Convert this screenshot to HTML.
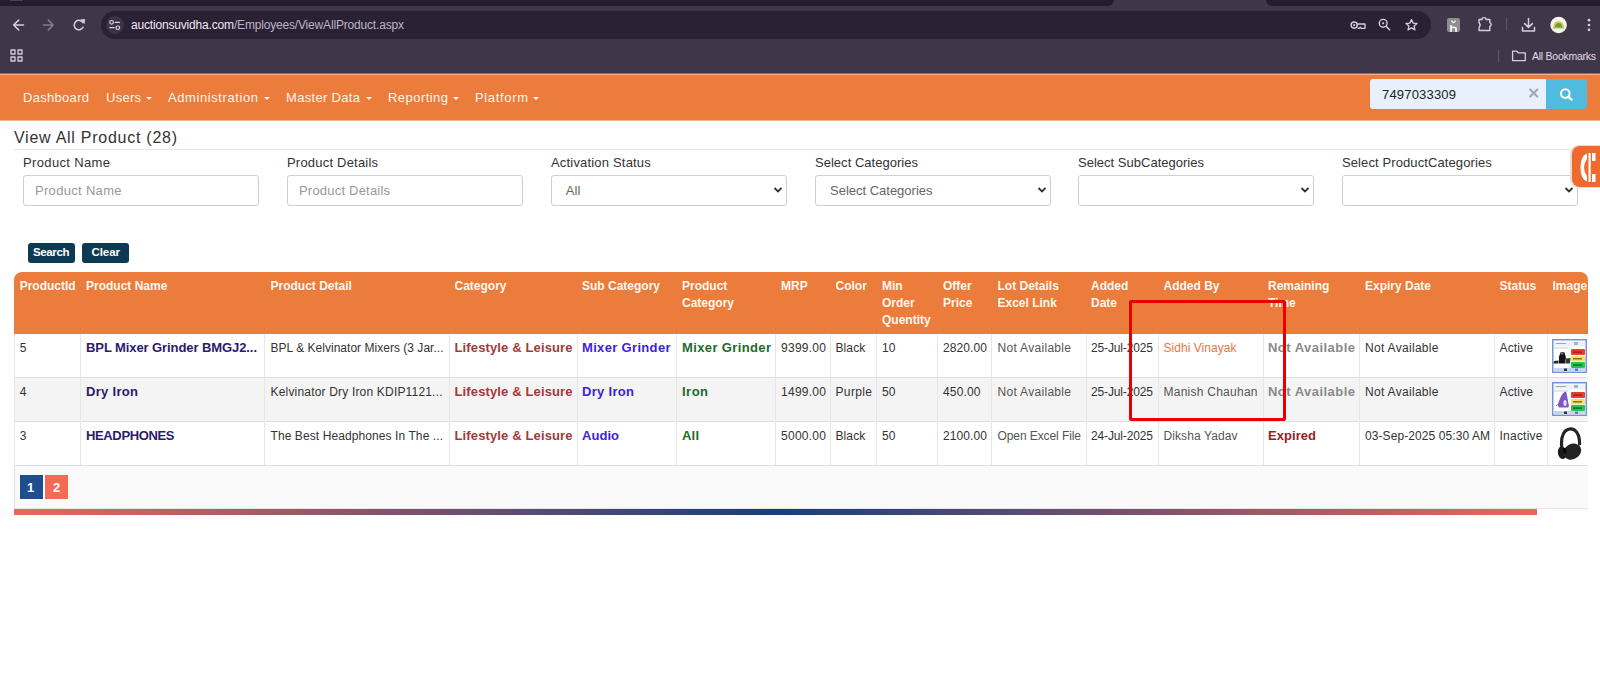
<!DOCTYPE html>
<html><head><meta charset="utf-8">
<style>
*{box-sizing:border-box;margin:0;padding:0}
html,body{width:1600px;height:690px;overflow:hidden;background:#fff;font-family:'Liberation Sans',sans-serif;}
.a{position:absolute}
.t{position:absolute;white-space:nowrap;line-height:1}
</style></head><body>
<div class="a" style="left:0;top:0;width:1600px;height:73px;background:#3f3649"></div><div class="a" style="left:0;top:0;width:1114px;height:6px;background:#251c30;border-bottom-right-radius:6px"></div><div class="a" style="left:1266px;top:0;width:334px;height:6px;background:#251c30;border-bottom-left-radius:6px"></div><div class="a" style="left:10px;top:0;width:13px;height:1px;background:#4a4055"></div><div class="a" style="left:101px;top:11px;width:1330px;height:28px;background:#2a2134;border-radius:14px"></div><div class="a" style="left:105.7px;top:16px;width:18px;height:18px;background:#3c3347;border-radius:9px"></div><div class="t" style="left:131px;top:19px;font-size:12px;color:#eeeaf2;font-weight:400;letter-spacing:-0.176px;">auctionsuvidha.com<span style="color:#bcb4c6">/Employees/ViewAllProduct.aspx</span></div>
<svg class="a" style="left:0;top:0" width="1600" height="73" viewBox="0 0 1600 73">
 <g fill="none" stroke="#d6cee0" stroke-width="1.5" stroke-linecap="round" stroke-linejoin="round">
  <path d="M13.6 25 H23.5 M13.6 25 L18.7 20.1 M13.6 25 L18.7 29.9"/>
  <path d="M43.5 25 H53.2 M53.2 25 L48.3 20.1 M53.2 25 L48.3 29.9" stroke="#857b90"/>
  <path d="M82.9 22.6 A4.7 4.7 0 1 0 83.1 27.2"/>
  <circle cx="111.6" cy="22.3" r="1.8" stroke-width="1.2"/>
  <path d="M115.2 22.4 H119.3" stroke-width="1.3"/>
  <circle cx="117.8" cy="27.8" r="1.8" stroke-width="1.2"/>
  <path d="M110 27.7 H114.2" stroke-width="1.3"/>
  <rect x="11" y="50" width="4" height="4" stroke-width="1.3" stroke-linecap="butt"/>
  <rect x="18" y="50" width="4" height="4" stroke-width="1.3" stroke-linecap="butt"/>
  <rect x="11" y="57" width="4" height="4" stroke-width="1.3" stroke-linecap="butt"/>
  <rect x="18" y="57" width="4" height="4" stroke-width="1.3" stroke-linecap="butt"/>
  <circle cx="1354.2" cy="25.1" r="3.1" stroke-width="1.4"/>
  <path d="M1357.3 24 H1365 V28.3 H1361.2 L1360.2 27.2 L1359.2 28.3 H1358" stroke-width="1.3"/>
  <circle cx="1383.2" cy="23.3" r="3.9" stroke-width="1.4"/>
  <path d="M1386.1 26.2 L1389.6 29.7" stroke-width="1.5"/>
  <path d="M1411.5 19.5 L1413.2 23.1 L1417 23.5 L1414.1 26.1 L1415 29.9 L1411.5 27.9 L1408 29.9 L1408.9 26.1 L1406 23.5 L1409.8 23.1 Z" stroke-width="1.3"/>
  <path d="M1479 19.5 H1482 V18.8 Q1482 17.6 1484 17.6 Q1486 17.6 1486 18.8 V19.5 H1489.8 V22.6 Q1491.2 23 1491.2 24.5 Q1491.2 26 1489.8 26.4 V30.5 H1479 Q1478.6 27.5 1480.2 25 Q1478.6 22.5 1479 19.5 Z" stroke-width="1.4"/>
  <path d="M1528.5 18.6 V27.3 M1524.6 23.6 L1528.5 27.4 L1532.4 23.6 M1522.5 27.5 V30.9 H1534.5 V27.5"/>
 </g>
 <path d="M80.6 19.8 L84.7 19.3 L84.4 23.6 Z" fill="#d6cee0" stroke="#d6cee0" stroke-width="0.6" stroke-linejoin="round"/>
 <circle cx="1354.2" cy="25.1" r="1.1" fill="#d6cee0"/>
 <circle cx="1383.2" cy="23.3" r="1.1" fill="#d6cee0"/>
 <rect x="1506" y="18" width="1" height="13" fill="#5f566a"/>
 <rect x="1447" y="18" width="13" height="14" rx="2" fill="#8f8c92"/>
 <path d="M1451.3 20.8 L1453.5 22.6 L1455.7 20.8" stroke="#f2f2f2" stroke-width="1.2" fill="none"/>
 <path d="M1451 32 V25 M1451 28.2 Q1453.5 26.4 1456 28.2 V32" stroke="#fff" stroke-width="1.6" fill="none"/>
 <circle cx="1558.6" cy="25" r="8.3" fill="#f6f3ee"/>
 <path d="M1553 28 Q1553.5 21.5 1558.6 21.2 Q1563.7 21.5 1564.2 28 Z" fill="#e0c040"/>
 <path d="M1555 27.5 Q1555.5 23.2 1558.6 23 Q1561.7 23.2 1562.2 27.5 Z" fill="#58a838"/>
 <rect x="1553" y="27.6" width="11.2" height="0.8" fill="#9bbf50"/>
 <circle cx="1589" cy="20.2" r="1.35" fill="#d6cee0"/>
 <circle cx="1589" cy="25" r="1.35" fill="#d6cee0"/>
 <circle cx="1589" cy="29.8" r="1.35" fill="#d6cee0"/>
 <rect x="1498" y="50" width="1" height="12" fill="#5f566a"/>
 <path d="M1512.6 51.2 H1516.8 L1518.2 52.8 H1525.3 V60.6 H1512.6 Z" fill="none" stroke="#d6cee0" stroke-width="1.3" stroke-linejoin="round"/>
</svg>
<div class="t" style="left:1532px;top:51px;font-size:10.5px;color:#e3dde9;font-weight:400;letter-spacing:-0.259px;">All Bookmarks</div><div class="a" style="left:0;top:73px;width:1600px;height:1px;background:#8a6c6c"></div><div class="a" style="left:0;top:74px;width:1600px;height:1px;background:#f5b08a"></div><div class="a" style="left:0;top:75px;width:1600px;height:45px;background:#eb7c3b"></div><div class="a" style="left:0;top:120px;width:1600px;height:1px;background:#f3b690"></div><div class="t" style="left:23px;top:90.75px;font-size:13px;color:#fff6ec;font-weight:400;letter-spacing:0.299px;">Dashboard</div><div class="t" style="left:106px;top:90.75px;font-size:13px;color:#fff6ec;font-weight:400;letter-spacing:0.262px;">Users</div><div class="t" style="left:168px;top:90.75px;font-size:13px;color:#fff6ec;font-weight:400;letter-spacing:0.587px;">Administration</div><div class="t" style="left:286px;top:90.75px;font-size:13px;color:#fff6ec;font-weight:400;letter-spacing:0.319px;">Master Data</div><div class="t" style="left:388px;top:90.75px;font-size:13px;color:#fff6ec;font-weight:400;letter-spacing:0.453px;">Reporting</div><div class="t" style="left:475px;top:90.75px;font-size:13px;color:#fff6ec;font-weight:400;letter-spacing:0.656px;">Platform</div><div class="a" style="left:146px;top:97px;width:0;height:0;border-left:3.5px solid transparent;border-right:3.5px solid transparent;border-top:3.5px solid #fff6ec"></div><div class="a" style="left:264px;top:97px;width:0;height:0;border-left:3.5px solid transparent;border-right:3.5px solid transparent;border-top:3.5px solid #fff6ec"></div><div class="a" style="left:366px;top:97px;width:0;height:0;border-left:3.5px solid transparent;border-right:3.5px solid transparent;border-top:3.5px solid #fff6ec"></div><div class="a" style="left:453px;top:97px;width:0;height:0;border-left:3.5px solid transparent;border-right:3.5px solid transparent;border-top:3.5px solid #fff6ec"></div><div class="a" style="left:533px;top:97px;width:0;height:0;border-left:3.5px solid transparent;border-right:3.5px solid transparent;border-top:3.5px solid #fff6ec"></div><div class="a" style="left:1370px;top:79px;width:176px;height:30px;background:#e8f0fe;border-radius:3px 0 0 3px"></div><div class="t" style="left:1382px;top:88px;font-size:13px;color:#222;font-weight:400;letter-spacing:0.188px;">7497033309</div><svg class="a" style="left:1520px;top:80px" width="30" height="28" viewBox="1520 80 30 28"><path d="M1530.2 89.5 L1537.3 96.6 M1537.3 89.5 L1530.2 96.6" stroke="#a4a7ae" stroke-width="2.1" stroke-linecap="round"/></svg><div class="a" style="left:1546px;top:79px;width:41px;height:30px;background:#50bbdf;border-radius:0 3px 3px 0"></div><svg class="a" style="left:1558px;top:86px" width="16" height="16" viewBox="0 0 16 16"><circle cx="7.3" cy="7.6" r="4.3" fill="none" stroke="#fff" stroke-width="2"/><path d="M10.4 10.8 L13.6 13.6" stroke="#fff" stroke-width="2.4" stroke-linecap="round"/></svg><div class="t" style="left:14px;top:130px;font-size:16px;color:#333;font-weight:400;letter-spacing:0.739px;">View All Product (28)</div><div class="a" style="left:14px;top:149px;width:1576px;height:1px;background:#e8e8e8"></div><div class="t" style="left:23px;top:156px;font-size:13px;color:#333;font-weight:400;letter-spacing:0.355px;">Product Name</div><div class="a" style="left:23px;top:175px;width:236px;height:31px;border:1px solid #cfcfcf;border-radius:3px;background:#fff"></div><div class="t" style="left:35.0px;top:184px;font-size:13px;color:#999;font-weight:400;letter-spacing:0.310px;">Product Name</div><div class="t" style="left:287px;top:156px;font-size:13px;color:#333;font-weight:400;letter-spacing:0.203px;">Product Details</div><div class="a" style="left:287px;top:175px;width:236px;height:31px;border:1px solid #cfcfcf;border-radius:3px;background:#fff"></div><div class="t" style="left:299.0px;top:184px;font-size:13px;color:#999;font-weight:400;letter-spacing:0.203px;">Product Details</div><div class="t" style="left:551px;top:156px;font-size:13px;color:#333;font-weight:400;letter-spacing:0.183px;">Activation Status</div><div class="a" style="left:551px;top:175px;width:236px;height:31px;border:1px solid #cfcfcf;border-radius:3px;background:#fff"></div><div class="t" style="left:565.75px;top:184px;font-size:13px;color:#666;font-weight:400;letter-spacing:0.148px;">All</div><svg class="a" style="left:773px;top:186px" width="10" height="8" viewBox="0 0 10 8"><path d="M1.5 2 L5 5.5 L8.5 2" fill="none" stroke="#333" stroke-width="1.8"/></svg><div class="t" style="left:815px;top:156px;font-size:13px;color:#333;font-weight:400;letter-spacing:0.023px;">Select Categories</div><div class="a" style="left:815px;top:175px;width:236px;height:31px;border:1px solid #cfcfcf;border-radius:3px;background:#fff"></div><div class="t" style="left:830.0px;top:184px;font-size:13px;color:#666;font-weight:400;letter-spacing:-0.008px;">Select Categories</div><svg class="a" style="left:1037px;top:186px" width="10" height="8" viewBox="0 0 10 8"><path d="M1.5 2 L5 5.5 L8.5 2" fill="none" stroke="#333" stroke-width="1.8"/></svg><div class="t" style="left:1078px;top:156px;font-size:13px;color:#333;font-weight:400;letter-spacing:0.013px;">Select SubCategories</div><div class="a" style="left:1078px;top:175px;width:236px;height:31px;border:1px solid #cfcfcf;border-radius:3px;background:#fff"></div><svg class="a" style="left:1300px;top:186px" width="10" height="8" viewBox="0 0 10 8"><path d="M1.5 2 L5 5.5 L8.5 2" fill="none" stroke="#333" stroke-width="1.8"/></svg><div class="t" style="left:1342px;top:156px;font-size:13px;color:#333;font-weight:400;letter-spacing:0.101px;">Select ProductCategories</div><div class="a" style="left:1342px;top:175px;width:236px;height:31px;border:1px solid #cfcfcf;border-radius:3px;background:#fff"></div><svg class="a" style="left:1564px;top:186px" width="10" height="8" viewBox="0 0 10 8"><path d="M1.5 2 L5 5.5 L8.5 2" fill="none" stroke="#333" stroke-width="1.8"/></svg><div class="a" style="left:1572px;top:146px;width:40px;height:41px;background:#ef6a2c;border-radius:8px;box-shadow:0 0 0 1px #fbd6c0, -1px 0 1px 1px #d8dde6"></div><svg class="a" style="left:1578px;top:152px" width="22" height="32" viewBox="0 0 22 32"><path d="M9 1.5 Q2.5 4 2.5 15.5 Q2.5 27 9 29.5 L9 24 Q6 20 6 15.5 Q6 11 9 7 Z" fill="#fff"/><rect x="10.5" y="1" width="2.2" height="29" fill="#fff"/><rect x="14" y="1" width="3.5" height="8" fill="#fff"/><rect x="14" y="22" width="3.5" height="8" fill="#fff"/></svg><div class="a" style="left:28px;top:243px;width:46.5px;height:20px;background:#0c3a52;border-radius:3px"></div><div class="t" style="left:33px;top:247px;font-size:11.5px;color:#fff;font-weight:700;letter-spacing:-0.372px;">Search</div><div class="a" style="left:82px;top:243px;width:46.5px;height:20px;background:#0c3a52;border-radius:3px"></div><div class="t" style="left:91.5px;top:247px;font-size:11.5px;color:#fff;font-weight:700;letter-spacing:-0.070px;">Clear</div><div class="a" style="left:14px;top:272px;width:1574px;height:62px;background:#eb7c3b;border-radius:8px 8px 0 0"></div><div class="a" style="left:14px;top:377px;width:1574px;height:44px;background:#f4f4f4"></div><div class="a" style="left:14px;top:465px;width:1574px;height:44px;background:#f9f9f9;border-bottom:1px solid #e6e6e6"></div><div class="a" style="left:14px;top:377px;width:1574px;height:1px;background:#dedede"></div><div class="a" style="left:14px;top:421px;width:1574px;height:1px;background:#dedede"></div><div class="a" style="left:14px;top:465px;width:1574px;height:1px;background:#dedede"></div><div class="a" style="left:14px;top:334px;width:1px;height:131px;background:#e7e7e7"></div><div class="a" style="left:80px;top:334px;width:1px;height:131px;background:#e7e7e7"></div><div class="a" style="left:264px;top:334px;width:1px;height:131px;background:#e7e7e7"></div><div class="a" style="left:449px;top:334px;width:1px;height:131px;background:#e7e7e7"></div><div class="a" style="left:577px;top:334px;width:1px;height:131px;background:#e7e7e7"></div><div class="a" style="left:676px;top:334px;width:1px;height:131px;background:#e7e7e7"></div><div class="a" style="left:775px;top:334px;width:1px;height:131px;background:#e7e7e7"></div><div class="a" style="left:830px;top:334px;width:1px;height:131px;background:#e7e7e7"></div><div class="a" style="left:876px;top:334px;width:1px;height:131px;background:#e7e7e7"></div><div class="a" style="left:937px;top:334px;width:1px;height:131px;background:#e7e7e7"></div><div class="a" style="left:991px;top:334px;width:1px;height:131px;background:#e7e7e7"></div><div class="a" style="left:1086px;top:334px;width:1px;height:131px;background:#e7e7e7"></div><div class="a" style="left:1158px;top:334px;width:1px;height:131px;background:#e7e7e7"></div><div class="a" style="left:1263px;top:334px;width:1px;height:131px;background:#e7e7e7"></div><div class="a" style="left:1359px;top:334px;width:1px;height:131px;background:#e7e7e7"></div><div class="a" style="left:1494px;top:334px;width:1px;height:131px;background:#e7e7e7"></div><div class="a" style="left:1547px;top:334px;width:1px;height:131px;background:#e7e7e7"></div><div class="a" style="left:14px;top:465px;width:1px;height:44px;background:#e2e2e2"></div><div class="a" style="left:19.7px;top:277.5px;width:67px;overflow:hidden;font-size:12px;line-height:17px;color:#fff8f0;font-weight:700;white-space:nowrap">ProductId</div><div class="a" style="left:86px;top:277.5px;width:185px;overflow:hidden;font-size:12px;line-height:17px;color:#fff8f0;font-weight:700;white-space:nowrap">Product Name</div><div class="a" style="left:270.5px;top:277.5px;width:186px;overflow:hidden;font-size:12px;line-height:17px;color:#fff8f0;font-weight:700;white-space:nowrap">Product Detail</div><div class="a" style="left:454.5px;top:277.5px;width:129px;overflow:hidden;font-size:12px;line-height:17px;color:#fff8f0;font-weight:700;white-space:nowrap">Category</div><div class="a" style="left:582px;top:277.5px;width:100px;overflow:hidden;font-size:12px;line-height:17px;color:#fff8f0;font-weight:700;white-space:nowrap">Sub Category</div><div class="a" style="left:682px;top:277.5px;width:100px;overflow:hidden;font-size:12px;line-height:17px;color:#fff8f0;font-weight:700;white-space:nowrap">Product<br>Category</div><div class="a" style="left:781px;top:277.5px;width:56px;overflow:hidden;font-size:12px;line-height:17px;color:#fff8f0;font-weight:700;white-space:nowrap">MRP</div><div class="a" style="left:835.5px;top:277.5px;width:47px;overflow:hidden;font-size:12px;line-height:17px;color:#fff8f0;font-weight:700;white-space:nowrap">Color</div><div class="a" style="left:882px;top:277.5px;width:62px;overflow:hidden;font-size:12px;line-height:17px;color:#fff8f0;font-weight:700;white-space:nowrap">Min<br>Order<br>Quentity</div><div class="a" style="left:943px;top:277.5px;width:55px;overflow:hidden;font-size:12px;line-height:17px;color:#fff8f0;font-weight:700;white-space:nowrap">Offer<br>Price</div><div class="a" style="left:997.5px;top:277.5px;width:96px;overflow:hidden;font-size:12px;line-height:17px;color:#fff8f0;font-weight:700;white-space:nowrap">Lot Details<br>Excel Link</div><div class="a" style="left:1091px;top:277.5px;width:73px;overflow:hidden;font-size:12px;line-height:17px;color:#fff8f0;font-weight:700;white-space:nowrap">Added<br>Date</div><div class="a" style="left:1163.5px;top:277.5px;width:106px;overflow:hidden;font-size:12px;line-height:17px;color:#fff8f0;font-weight:700;white-space:nowrap">Added By</div><div class="a" style="left:1268px;top:277.5px;width:97px;overflow:hidden;font-size:12px;line-height:17px;color:#fff8f0;font-weight:700;white-space:nowrap">Remaining<br>Time</div><div class="a" style="left:1365px;top:277.5px;width:136px;overflow:hidden;font-size:12px;line-height:17px;color:#fff8f0;font-weight:700;white-space:nowrap">Expiry Date</div><div class="a" style="left:1499.5px;top:277.5px;width:54px;overflow:hidden;font-size:12px;line-height:17px;color:#fff8f0;font-weight:700;white-space:nowrap">Status</div><div class="a" style="left:1552.5px;top:277.5px;width:36px;overflow:hidden;font-size:12px;line-height:17px;color:#fff8f0;font-weight:700;white-space:nowrap">Image</div><div class="t" style="left:19.7px;top:342px;font-size:12px;color:#333;font-weight:400;">5</div><div class="t" style="left:86px;top:341px;font-size:13px;color:#2b1b6b;font-weight:700;letter-spacing:-0.086px;">BPL Mixer Grinder BMGJ2...</div><div class="t" style="left:270.5px;top:342px;font-size:12px;color:#333;font-weight:400;letter-spacing:0.022px;">BPL &amp; Kelvinator Mixers (3 Jar...</div><div class="t" style="left:454.5px;top:341px;font-size:13px;color:#a23a3a;font-weight:700;letter-spacing:0.133px;">Lifestyle &amp; Leisure</div><div class="t" style="left:582px;top:341px;font-size:13px;color:#3d1fd8;font-weight:700;letter-spacing:0.331px;">Mixer Grinder</div><div class="t" style="left:682px;top:341px;font-size:13px;color:#1c6b2a;font-weight:700;letter-spacing:0.372px;">Mixer Grinder</div><div class="t" style="left:781px;top:342px;font-size:12px;color:#333;font-weight:400;letter-spacing:0.268px;">9399.00</div><div class="t" style="left:835.5px;top:342px;font-size:12px;color:#333;font-weight:400;letter-spacing:0.102px;">Black</div><div class="t" style="left:882px;top:342px;font-size:12px;color:#333;font-weight:400;">10</div><div class="t" style="left:943px;top:342px;font-size:12px;color:#333;font-weight:400;letter-spacing:0.102px;">2820.00</div><div class="t" style="left:997.5px;top:342px;font-size:12px;color:#555;font-weight:400;letter-spacing:0.306px;">Not Available</div><div class="t" style="left:1091px;top:342px;font-size:12px;color:#333;font-weight:400;letter-spacing:-0.138px;">25-Jul-2025</div><div class="t" style="left:1163.5px;top:342px;font-size:12px;color:#e8773f;font-weight:400;letter-spacing:0.042px;">Sidhi Vinayak</div><div class="t" style="left:1268px;top:341px;font-size:13px;color:#8a8a8a;font-weight:700;letter-spacing:0.467px;">Not Available</div><div class="t" style="left:1365px;top:342px;font-size:12px;color:#333;font-weight:400;letter-spacing:0.306px;">Not Available</div><div class="t" style="left:1499.5px;top:342px;font-size:12px;color:#333;font-weight:400;letter-spacing:0.163px;">Active</div><div class="t" style="left:19.7px;top:386px;font-size:12px;color:#333;font-weight:400;">4</div><div class="t" style="left:86px;top:385px;font-size:13px;color:#2b1b6b;font-weight:700;letter-spacing:0.308px;">Dry Iron</div><div class="t" style="left:270.5px;top:386px;font-size:12px;color:#333;font-weight:400;letter-spacing:0.182px;">Kelvinator Dry Iron KDIP1121...</div><div class="t" style="left:454.5px;top:385px;font-size:13px;color:#a23a3a;font-weight:700;letter-spacing:0.133px;">Lifestyle &amp; Leisure</div><div class="t" style="left:582px;top:385px;font-size:13px;color:#3d1fd8;font-weight:700;letter-spacing:0.308px;">Dry Iron</div><div class="t" style="left:682px;top:385px;font-size:13px;color:#1c6b2a;font-weight:700;letter-spacing:0.479px;">Iron</div><div class="t" style="left:781px;top:386px;font-size:12px;color:#333;font-weight:400;letter-spacing:0.268px;">1499.00</div><div class="t" style="left:835.5px;top:386px;font-size:12px;color:#333;font-weight:400;letter-spacing:0.362px;">Purple</div><div class="t" style="left:882px;top:386px;font-size:12px;color:#333;font-weight:400;">50</div><div class="t" style="left:943px;top:386px;font-size:12px;color:#333;font-weight:400;letter-spacing:0.159px;">450.00</div><div class="t" style="left:997.5px;top:386px;font-size:12px;color:#555;font-weight:400;letter-spacing:0.306px;">Not Available</div><div class="t" style="left:1091px;top:386px;font-size:12px;color:#333;font-weight:400;letter-spacing:-0.138px;">25-Jul-2025</div><div class="t" style="left:1163.5px;top:386px;font-size:12px;color:#555;font-weight:400;letter-spacing:0.251px;">Manish Chauhan</div><div class="t" style="left:1268px;top:385px;font-size:13px;color:#8a8a8a;font-weight:700;letter-spacing:0.467px;">Not Available</div><div class="t" style="left:1365px;top:386px;font-size:12px;color:#333;font-weight:400;letter-spacing:0.306px;">Not Available</div><div class="t" style="left:1499.5px;top:386px;font-size:12px;color:#333;font-weight:400;letter-spacing:0.163px;">Active</div><div class="t" style="left:19.7px;top:430px;font-size:12px;color:#333;font-weight:400;">3</div><div class="t" style="left:86px;top:429px;font-size:13px;color:#2b1b6b;font-weight:700;letter-spacing:-0.361px;">HEADPHONES</div><div class="t" style="left:270.5px;top:430px;font-size:12px;color:#333;font-weight:400;letter-spacing:0.090px;">The Best Headphones In The ...</div><div class="t" style="left:454.5px;top:429px;font-size:13px;color:#a23a3a;font-weight:700;letter-spacing:0.133px;">Lifestyle &amp; Leisure</div><div class="t" style="left:582px;top:429px;font-size:13px;color:#3d1fd8;font-weight:700;letter-spacing:0.043px;">Audio</div><div class="t" style="left:682px;top:429px;font-size:13px;color:#1c6b2a;font-weight:700;letter-spacing:0.188px;">All</div><div class="t" style="left:781px;top:430px;font-size:12px;color:#333;font-weight:400;letter-spacing:0.268px;">5000.00</div><div class="t" style="left:835.5px;top:430px;font-size:12px;color:#333;font-weight:400;letter-spacing:0.102px;">Black</div><div class="t" style="left:882px;top:430px;font-size:12px;color:#333;font-weight:400;">50</div><div class="t" style="left:943px;top:430px;font-size:12px;color:#333;font-weight:400;letter-spacing:0.102px;">2100.00</div><div class="t" style="left:997.5px;top:430px;font-size:12px;color:#555;font-weight:400;letter-spacing:-0.086px;">Open Excel File</div><div class="t" style="left:1091px;top:430px;font-size:12px;color:#333;font-weight:400;letter-spacing:-0.138px;">24-Jul-2025</div><div class="t" style="left:1163.5px;top:430px;font-size:12px;color:#555;font-weight:400;letter-spacing:0.097px;">Diksha Yadav</div><div class="t" style="left:1268px;top:429px;font-size:13px;color:#9b1c1c;font-weight:700;letter-spacing:0.052px;">Expired</div><div class="t" style="left:1365px;top:430px;font-size:12px;color:#333;font-weight:400;letter-spacing:0.083px;">03-Sep-2025 05:30 AM</div><div class="t" style="left:1499.5px;top:430px;font-size:12px;color:#333;font-weight:400;letter-spacing:0.234px;">Inactive</div><svg class="a" style="left:1552px;top:338.5px" width="35" height="34" viewBox="0 0 35 34"><rect x="0.75" y="0.75" width="33.5" height="32.5" fill="#fff" stroke="#6a8ed6" stroke-width="1.4"/><rect x="2" y="2.5" width="31" height="5" fill="#eef1f5"/><rect x="4" y="4" width="10" height="1" fill="#9aa"/><rect x="22" y="3" width="4" height="3" fill="#9bb"/><rect x="2" y="8.5" width="14" height="1" fill="#ccd"/><rect x="19" y="10" width="14" height="6" rx="1" fill="#ee3b30"/><rect x="21" y="12.5" width="9" height="1.2" fill="#8a1a10"/><rect x="19" y="17" width="14" height="5.5" rx="1" fill="#efe070"/><rect x="21" y="19.2" width="9" height="1.2" fill="#6a5a10"/><rect x="19" y="23" width="14" height="6" rx="1" fill="#22c45a"/><rect x="21" y="25.5" width="9" height="1.2" fill="#0a5a20"/><rect x="1.5" y="29" width="32" height="3.5" fill="#c8d4ea"/><rect x="12" y="29.5" width="3" height="2.5" fill="#333"/><rect x="23" y="29.5" width="3" height="2.5" fill="#5a80d2"/><path d="M8 14 Q10 12.5 12.5 13.5 L13.5 17 Q14.5 19 13.5 21 L13.5 24.5 L7 24.5 L7 20.5 Q6.5 17.5 8 15 Z" fill="#141414"/><path d="M2 22 L6.5 21.5 L6.5 24.5 L1.5 24.5 Z" fill="#2a2a2a"/><path d="M14 19.5 L18.5 19 L18 24.5 L14 24.5 Z" fill="#3a3a3a"/><ellipse cx="10" cy="14.5" rx="1.6" ry="1.2" fill="#666"/></svg><svg class="a" style="left:1552px;top:382px" width="35" height="34" viewBox="0 0 35 34"><rect x="0.75" y="0.75" width="33.5" height="32.5" fill="#fff" stroke="#6a8ed6" stroke-width="1.4"/><rect x="2" y="2.5" width="31" height="5" fill="#eef1f5"/><rect x="4" y="4" width="10" height="1" fill="#9aa"/><rect x="22" y="3" width="4" height="3" fill="#9bb"/><rect x="2" y="8.5" width="14" height="1" fill="#ccd"/><rect x="19" y="10" width="14" height="6" rx="1" fill="#ee3b30"/><rect x="21" y="12.5" width="9" height="1.2" fill="#8a1a10"/><rect x="19" y="17" width="14" height="5.5" rx="1" fill="#efe070"/><rect x="21" y="19.2" width="9" height="1.2" fill="#6a5a10"/><rect x="19" y="23" width="14" height="6" rx="1" fill="#22c45a"/><rect x="21" y="25.5" width="9" height="1.2" fill="#0a5a20"/><rect x="1.5" y="29" width="32" height="3.5" fill="#c8d4ea"/><rect x="12" y="29.5" width="3" height="2.5" fill="#333"/><rect x="23" y="29.5" width="3" height="2.5" fill="#5a80d2"/><path d="M13 9.5 Q9 12 6 22 Q5.5 25 7 25.5 L16 25.5 Q17.5 25 16.5 22 L14.5 10.5 Z" fill="#7d55c8"/><ellipse cx="13" cy="21" rx="1.6" ry="3" fill="#e8e0f8"/><path d="M6 22 L4 24" stroke="#777" stroke-width="0.8"/></svg><svg class="a" style="left:1548px;top:422px" width="44" height="44" viewBox="0 0 44 44"><path d="M13.8 27 Q12.5 14 17 9.3 Q21.5 5.2 26.5 8 Q31.6 11.5 31.6 22" fill="none" stroke="#242424" stroke-width="3.2" stroke-linecap="round"/><ellipse cx="14.2" cy="30.8" rx="4.3" ry="6.3" transform="rotate(-10 14.2 30.8)" fill="#1b1b1b"/><ellipse cx="24.2" cy="29.6" rx="9.4" ry="7.6" transform="rotate(-28 24.2 29.6)" fill="#232323"/><ellipse cx="16.8" cy="29" rx="1.7" ry="3.3" transform="rotate(-12 16.8 29)" fill="#0a0a0a"/></svg><div class="a" style="left:20px;top:475px;width:23px;height:24px;background:#1f4e8f"></div><div class="t" style="left:27px;top:481px;font-size:13px;color:#fff;font-weight:700;">1</div><div class="a" style="left:45px;top:475px;width:23px;height:24px;background:#f36b55"></div><div class="t" style="left:53px;top:481px;font-size:13px;color:#fff;font-weight:700;">2</div><div class="a" style="left:14px;top:509px;width:1523px;height:6px;background:linear-gradient(90deg,#e8695a,#173e7c 50%,#e8695a)"></div><div class="a" style="left:1129px;top:300px;width:157px;height:121px;border:3px solid #e80000;border-radius:2px"></div></body></html>
